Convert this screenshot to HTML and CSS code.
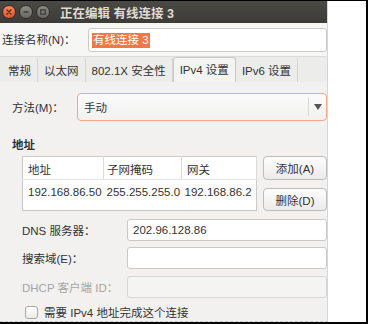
FILE: index.html
```html
<!DOCTYPE html>
<html lang="zh-CN">
<head>
    <meta charset="UTF-8">
    <meta name="viewport" content="width=device-width, initial-scale=1.0">
    <title>正在编辑 有线连接 3</title>
    <link rel="stylesheet" href="styles.css">
</head>
<body>
    <div class="screen">
        <!-- Connection editor window -->
        <div class="window">
            <div class="titlebar">
                <span class="wbtn close">
                    <svg width="6" height="6" viewBox="0 0 6 6"><path d="M1 1L5 5M5 1L1 5" stroke="#5a2510" stroke-width="1.3" stroke-linecap="round"/></svg>
                </span>
                <span class="wbtn">
                    <svg width="6" height="6" viewBox="0 0 6 6"><path d="M0.5 3H5.5" stroke="#3a3935" stroke-width="1.4"/></svg>
                </span>
                <span class="wbtn">
                    <svg width="6" height="6" viewBox="0 0 6 6"><rect x="0.8" y="0.8" width="4.4" height="4.4" fill="none" stroke="#3a3935" stroke-width="1.2"/></svg>
                </span>
                <span class="title">正在编辑 有线连接 3</span>
            </div>

            <div class="name-row">
                <span class="name-label">连接名称(N)：</span>
                <div class="entry name-entry"><span class="selected">有线连接 3</span></div>
            </div>

            <div class="tabs">
                <span class="tab first">常规</span>
                <span class="tab">以太网</span>
                <span class="tab">802.1X 安全性</span>
                <span class="tab active">IPv4 设置</span>
                <span class="tab">IPv6 设置</span>
            </div>

            <div class="panel">
                <div class="method-row">
                    <span class="method-label">方法(M)：</span>
                    <div class="combo">
                        <span class="combo-text">手动</span>
                        <span class="combo-arrow">
                            <svg width="8" height="6" viewBox="0 0 8 6"><path d="M0 0H8L4 6Z" fill="#555"/></svg>
                        </span>
                    </div>
                </div>

                <div class="section-title">地址</div>

                <div class="addr-row">
                    <table class="addr-table">
                        <thead>
                            <tr>
                                <th>地址</th>
                                <th>子网掩码</th>
                                <th>网关</th>
                            </tr>
                        </thead>
                        <tbody>
                            <tr>
                                <td>192.168.86.50</td>
                                <td>255.255.255.0</td>
                                <td>192.168.86.2</td>
                            </tr>
                        </tbody>
                    </table>
                    <div class="addr-buttons">
                        <button type="button" class="btn">添加(A)</button>
                        <button type="button" class="btn">删除(D)</button>
                    </div>
                </div>

                <div class="field-row dns-row">
                    <span class="field-label">DNS 服务器：</span>
                    <div class="entry field-entry">202.96.128.86</div>
                </div>
                <div class="field-row search-row">
                    <span class="field-label">搜索域(E)：</span>
                    <div class="entry field-entry"></div>
                </div>
                <div class="field-row dhcp-row disabled">
                    <span class="field-label">DHCP 客户端 ID：</span>
                    <div class="entry field-entry"></div>
                </div>

                <div class="check-row">
                    <span class="checkbox"></span>
                    <span>需要 IPv4 地址完成这个连接</span>
                </div>
            </div>
        </div>
    </div>
</body>
</html>
```

FILE: styles.css
```css
/* Page and outer frame */
body {
    margin: 0;
    background-color: #fff;
    font-family: "Liberation Sans", "Noto Sans CJK SC", sans-serif;
    font-size: 11.5px;
    color: #333;
}
.screen {
    width: 368px;
    height: 324px;
    box-sizing: border-box;
    border-top: 1px solid #000;
    border-right: 2px solid #000;
    border-bottom: 2px solid #000;
    background-color: #fff;
    overflow: hidden;
}
.window {
    width: 328px;
    height: 321px;
    box-sizing: border-box;
    background-color: #f2f1f0;
    border-right: 1px solid #d6d6d4;
    border-bottom: 1px dashed #c8c8c8;
    display: flex;
    flex-direction: column;
    overflow: hidden;
}

/* Title bar */
.titlebar {
    height: 22px;
    flex: none;
    display: flex;
    align-items: center;
    padding-left: 2px;
    background: linear-gradient(#4a4944, #3c3b37);
}
.wbtn {
    width: 12px;
    height: 12px;
    margin-right: 3px;
    border-radius: 50%;
    background: linear-gradient(#8c8a84, #6a6863);
    border: 1px solid #2f2e2b;
    display: flex;
    align-items: center;
    justify-content: center;
}
.wbtn.close {
    background: linear-gradient(#f7875a, #e2542a);
}
.title {
    margin-left: 7px;
    color: #dfdbd2;
    font-size: 12.5px;
    font-weight: bold;
}

/* Connection name row */
.name-row {
    height: 34px;
    flex: none;
    display: flex;
    align-items: flex-start;
    padding-top: 5px;
    box-sizing: border-box;
    background-color: #f6f6f5;
    border-bottom: 1px solid #dcdcda;
}
.name-label {
    width: 86px;
    padding-left: 2px;
    line-height: 24px;
}
.entry {
    background-color: #fff;
    border: 1px solid #c9c9c7;
    border-radius: 3px;
    box-sizing: border-box;
    display: flex;
    align-items: center;
    padding-left: 5px;
}
.name-entry {
    flex: 1;
    height: 24px;
    padding-left: 3px;
}
.selected {
    background-color: #f07746;
    color: #fff;
    padding: 0 1px;
    line-height: 15px;
}

/* Notebook tabs */
.tabs {
    height: 25px;
    flex: none;
    display: flex;
    align-items: flex-end;
    background-color: #ececeb;
}
.tab {
    height: 24px;
    line-height: 26px;
    padding: 0 6px;
    border-right: 1px solid #d4d4d2;
}
.tab.first {
    padding-left: 8px;
}
.tab.active {
    height: 25px;
    background-color: #f4f4f3;
    border: 1px solid #c8c8c6;
    border-bottom: none;
    border-radius: 3px 3px 0 0;
    box-sizing: border-box;
    line-height: 25px;
}

/* Tab page content */
.panel {
    flex: 1;
    padding: 11px 0 0 12px;
    background-color: #f2f1f0;
}
.method-row {
    display: flex;
    align-items: center;
}
.method-label {
    width: 65px;
}
.combo {
    flex: 1;
    height: 28px;
    display: flex;
    align-items: center;
    box-sizing: border-box;
    border: 1px solid #eda98a;
    border-radius: 4px;
    background: linear-gradient(#fbfbfb, #f1f1f0);
}
.combo-text {
    flex: 1;
    padding-left: 6px;
}
.combo-arrow {
    width: 17px;
    height: 18px;
    border-left: 1px solid #d8d8d6;
    display: flex;
    align-items: center;
    justify-content: center;
}
.section-title {
    margin-top: 17px;
    font-weight: bold;
    line-height: 14px;
}

/* Address table and buttons */
.addr-row {
    display: flex;
    margin-top: 4px;
    padding-left: 10px;
}
.addr-table {
    width: 235px;
    height: 55px;
    border-collapse: collapse;
    background-color: #fff;
    border: 1px solid #c9c9c7;
}
.addr-table th, .addr-table td {
    text-align: left;
    font-weight: normal;
    padding: 0 0 0 5px;
    white-space: nowrap;
}
.addr-table th {
    height: 21px;
    border-right: 1px solid #dcdcda;
    border-bottom: 1px solid #e4e4e2;
    padding-top: 1px;
}
.addr-table th:first-child, .addr-table td:first-child {
    width: 75px;
    padding-left: 5px;
}
.addr-table th:nth-child(2), .addr-table td:nth-child(2) {
    width: 74px;
    padding-left: 3px;
}
.addr-table td {
    vertical-align: top;
    padding-top: 6px;
}
.addr-table td:nth-child(3) {
    padding-left: 3px;
}
.addr-buttons {
    margin-left: 6px;
    display: flex;
    flex-direction: column;
    gap: 8px;
}
.btn {
    width: 64px;
    height: 24px;
    padding: 0;
    font-family: inherit;
    font-size: 11.5px;
    color: #333;
    border: 1px solid #bdbdbb;
    border-radius: 4px;
    background: linear-gradient(#fdfdfd, #ecebea);
}
.btn + .btn {
    height: 23px;
}

/* Labelled entries */
.field-row {
    display: flex;
    align-items: center;
    padding-left: 10px;
}
.dns-row {
    margin-top: 8px;
}
.search-row {
    margin-top: 6px;
}
.dhcp-row {
    margin-top: 7px;
}
.field-label {
    width: 105px;
}
.field-entry {
    flex: 1;
    height: 22px;
}
.disabled .field-label {
    color: #a5a5a3;
}
.disabled .field-entry {
    background-color: #f4f4f3;
    border-color: #d6d6d4;
}

/* Checkbox row */
.check-row {
    display: flex;
    align-items: center;
    margin-top: 6px;
    padding-left: 13px;
}
.checkbox {
    width: 11px;
    height: 11px;
    margin-right: 6px;
    border: 1px solid #a8a8a6;
    border-radius: 3px;
    background: linear-gradient(#fff, #ececeb);
}
```
